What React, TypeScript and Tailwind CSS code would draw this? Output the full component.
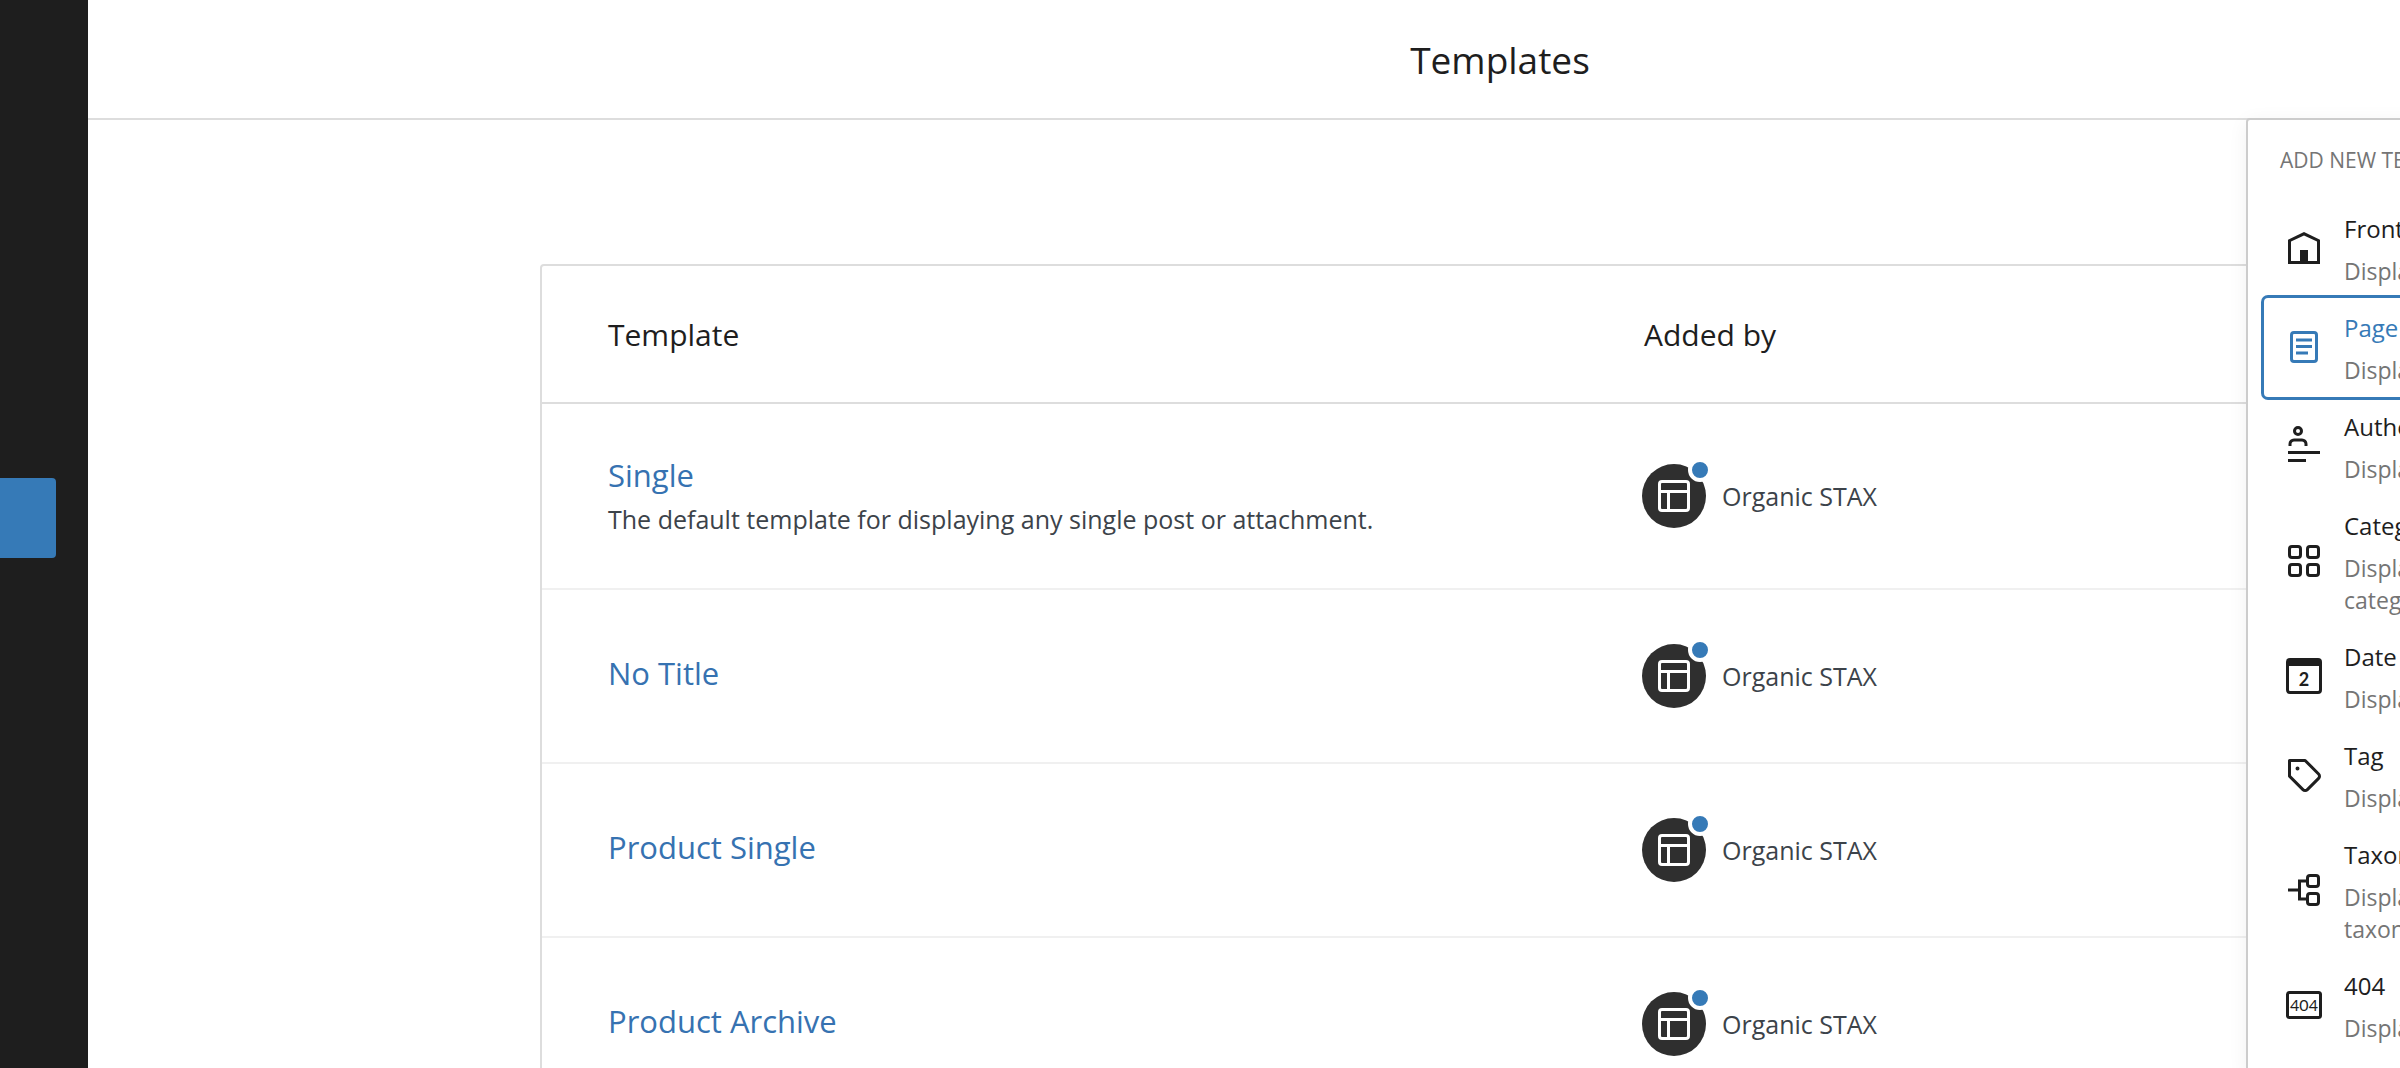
import type { ReactNode } from "react";

type Template = { title: string; description?: string; author: string };

const templates: Template[] = [
    {
        title: "Single",
        description: "The default template for displaying any single post or attachment.",
        author: "Organic STAX",
    },
    { title: "No Title", author: "Organic STAX" },
    { title: "Product Single", author: "Organic STAX" },
    { title: "Product Archive", author: "Organic STAX" },
];

function Icon({ children }: { children: ReactNode }) {
    return (
        <svg viewBox="0 0 24 24" className="size-12 shrink-0" fill="currentColor" aria-hidden="true">
            {children}
        </svg>
    );
}

const LayoutIcon = () => (
    <Icon>
        <path d="M18 5.5H6a.5.5 0 00-.5.5v3h13V6a.5.5 0 00-.5-.5zm.5 5H10v8h8a.5.5 0 00.5-.5v-7.5zm-10 0h-3V18a.5.5 0 00.5.5h2.5v-8zM6 4h12a2 2 0 012 2v12a2 2 0 01-2 2H6a2 2 0 01-2-2V6a2 2 0 012-2z" />
    </Icon>
);

const HomeIcon = () => (
    <Icon>
        <path d="M12 4L4 7.9V20h16V7.9L12 4zm6.5 14.5H14V13h-4v5.5H5.5V8.8L12 5.7l6.5 3.1v9.7z" />
    </Icon>
);

const PageIcon = () => (
    <Icon>
        <path d="M7 5.5h10a.5.5 0 01.5.5v12a.5.5 0 01-.5.5H7a.5.5 0 01-.5-.5V6a.5.5 0 01.5-.5zM5 6a2 2 0 012-2h10a2 2 0 012 2v12a2 2 0 01-2 2H7a2 2 0 01-2-2V6z" fillRule="evenodd" />
        <path d="M8 7.75h8v1.5H8zM8 11h8v1.5H8zM8 14.25h6v1.5H8z" />
    </Icon>
);

const AuthorIcon = () => (
    <Icon>
        <path
            fillRule="evenodd"
            d="M10 4.5a1 1 0 11-2 0 1 1 0 012 0zm1.5 0a2.5 2.5 0 11-5 0 2.5 2.5 0 015 0zm2.25 7.5v-1A2.75 2.75 0 0011 8.25H7A2.75 2.75 0 004.25 11v1h1.5v-1c0-.69.56-1.25 1.25-1.25h4c.69 0 1.25.56 1.25 1.25v1h1.5zM4 20h9v-1.5H4V20zm16-4H4v-1.5h16V16z"
        />
    </Icon>
);

const CategoryIcon = () => (
    <Icon>
        <g fill="none" stroke="currentColor" strokeWidth="1.5">
            <rect x="4.75" y="4.75" width="5.5" height="5.5" rx="1.25" />
            <rect x="13.75" y="4.75" width="5.5" height="5.5" rx="1.25" />
            <rect x="4.75" y="13.75" width="5.5" height="5.5" rx="1.25" />
            <rect x="13.75" y="13.75" width="5.5" height="5.5" rx="1.25" />
        </g>
    </Icon>
);

const DateIcon = () => (
    <Icon>
        <path d="M5 3h14a2 2 0 012 2v14a2 2 0 01-2 2H5a2 2 0 01-2-2V5a2 2 0 012-2zM4.5 7v12a.5.5 0 00.5.5h14a.5.5 0 00.5-.5V7z" fillRule="evenodd" />
        <text x="12" y="16.8" textAnchor="middle" className="font-['Lato',sans-serif] text-[9px] font-bold">2</text>
    </Icon>
);

const TagIcon = () => (
    <Icon>
        <path d="M4.75 4a.75.75 0 00-.75.75v7.826c0 .2.08.39.22.53l6.72 6.716a2.313 2.313 0 003.276-.001l5.61-5.611-.531-.53.532.528a2.315 2.315 0 000-3.264L13.104 4.22a.75.75 0 00-.53-.22H4.75zM19 12.576a.815.815 0 01-.236.574l-5.61 5.611a.814.814 0 01-1.153 0L5.5 12.264V5.5h6.763l6.5 6.502a.816.816 0 01.237.574zM8.75 9.75a1 1 0 100-2 1 1 0 000 2z" />
    </Icon>
);

const TaxonomyIcon = () => (
    <Icon>
        <g fill="none" stroke="currentColor" strokeWidth="1.5">
            <rect x="13.75" y="4.75" width="5.5" height="5.5" rx="1.25" />
            <rect x="13.75" y="13.75" width="5.5" height="5.5" rx="1.25" />
            <path d="M13.5 7.5H9.75v9h3.75M4 12h5.75" />
        </g>
    </Icon>
);

const NotFoundIcon = () => (
    <Icon>
        <rect x="3.75" y="5.75" width="16.5" height="12.5" rx="1" fill="none" stroke="currentColor" strokeWidth="1.5" />
        <text x="12" y="14.8" textAnchor="middle" className="font-['Lato',sans-serif] text-[8px]">404</text>
    </Icon>
);

const menuItems = [
    { title: "Front Page", description: "Displays the site's homepage.", icon: <HomeIcon /> },
    { title: "Page", description: "Displays a single page.", icon: <PageIcon />, active: true },
    { title: "Author", description: "Displays posts by a single author.", icon: <AuthorIcon /> },
    { title: "Category", description: "Displays the latest posts from a single post category.", icon: <CategoryIcon /> },
    { title: "Date", description: "Displays posts from a specific date.", icon: <DateIcon /> },
    { title: "Tag", description: "Displays posts with a single post tag.", icon: <TagIcon /> },
    { title: "Taxonomy", description: "Displays the latest posts from a single post taxonomy.", icon: <TaxonomyIcon /> },
    { title: "404", description: "Displays when no content is found.", icon: <NotFoundIcon /> },
];

function NewTemplateMenu() {
    return (
        <div
            role="menu"
            aria-label="Add new template"
            className="absolute top-full right-6 w-[642px] rounded border-2 border-[#ccc] bg-white p-4 shadow-[0_4px_20px_rgba(0,0,0,0.06)]"
        >
            <h2 className="px-4 pt-2 pb-[23px] text-[21px] leading-8 text-[#757575] uppercase">Add new template</h2>
            {menuItems.map((item) => (
                <button
                    key={item.title}
                    type="button"
                    role="menuitem"
                    className={`flex w-full items-center gap-4 rounded px-4 pt-2.5 pb-[11px] text-left ${
                        item.active ? "text-[#367ab7] ring-3 ring-[#367ab7]" : "text-[#1e1e1e]"
                    }`}
                >
                    {item.icon}
                    <span className="flex flex-col gap-1.5">
                        <span className="text-2xl leading-10">{item.title}</span>
                        <span className="text-[23px] leading-8 text-[#757575]">{item.description}</span>
                    </span>
                </button>
            ))}
        </div>
    );
}

function AddedBy({ name }: { name: string }) {
    return (
        <div className="flex items-center gap-4 text-[25px] leading-8 text-[#3c434a]">
            <span className="relative rounded-full bg-[#2f2f2f] p-2 text-white">
                <LayoutIcon />
                {/* Customized marker */}
                <span className="absolute -top-1.5 -right-1.5 size-6 rounded-full border-4 border-white bg-[#367ab7]" />
            </span>
            {name}
        </div>
    );
}

export default function App() {
    return (
        <div className="flex h-screen overflow-hidden bg-white font-['Open_Sans','Noto_Sans',sans-serif] text-[#1e1e1e]">
            <nav aria-label="Editor" className="w-[88px] shrink-0 bg-[#1e1e1e] pt-[478px]">
                <a href="#templates" aria-label="Templates" className="block h-20 w-14 rounded-r bg-[#367ab7]" />
            </nav>

            {/* The canvas runs on past the right edge of the window */}
            <main className="-mr-[512px] min-w-0 flex-1">
                <header className="relative flex h-[120px] items-center justify-center border-b-2 border-[#ddd] pt-0.5">
                    <h1 className="text-[37px] leading-[52px] font-medium">Templates</h1>
                    <NewTemplateMenu />
                </header>

                <div className="mx-auto mt-36 max-w-[1920px] rounded border-2 border-[#ddd]">
                    <table className="w-full border-separate border-spacing-0 text-left">
                        <thead>
                            <tr className="text-[30px] leading-[44px]">
                                <th className="w-[1036px] border-b-2 border-[#ddd] px-[66px] pt-[47px] pb-[45px] font-medium">Template</th>
                                <th className="border-b-2 border-[#ddd] px-[66px] pt-[47px] pb-[45px] font-medium">Added by</th>
                            </tr>
                        </thead>
                        <tbody>
                            {templates.map(({ title, description, author }) => (
                                <tr key={title} className="h-[174px]">
                                    <td
                                        className={`border-b-2 border-[#f0f0f0] px-[66px] pt-[49px] ${
                                            description ? "pb-[47px]" : "pb-14"
                                        }`}
                                    >
                                        <a href="#template" className="block text-[31px] leading-[44px] text-[#3672b1]">
                                            {title}
                                        </a>
                                        {description && (
                                            <p className="text-[25px] leading-[44px] text-[#3c434a]">{description}</p>
                                        )}
                                    </td>
                                    <td className="border-b-2 border-[#f0f0f0] px-16 py-12">
                                        <AddedBy name={author} />
                                    </td>
                                </tr>
                            ))}
                        </tbody>
                    </table>
                </div>
            </main>
        </div>
    );
}
